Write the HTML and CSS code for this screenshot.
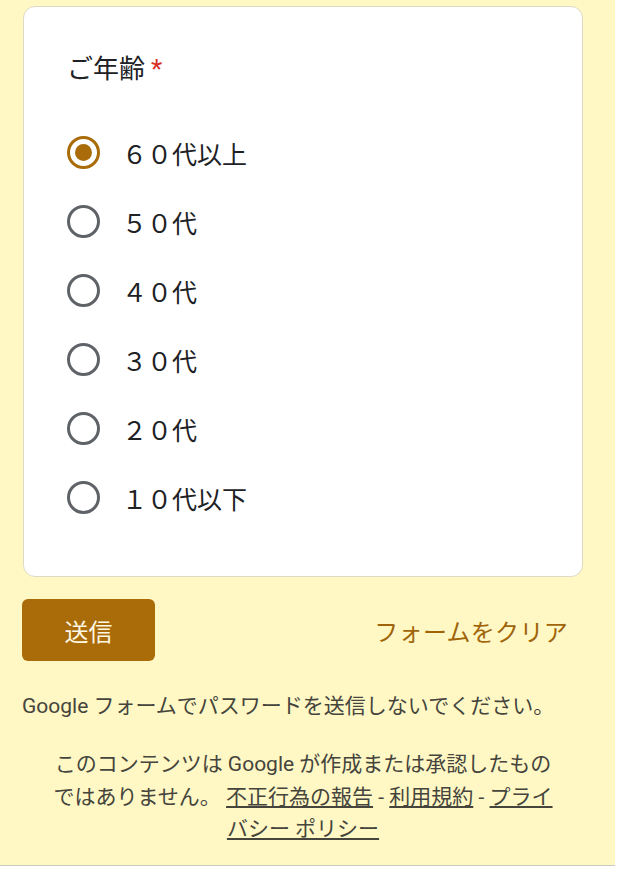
FILE: index.html
```html
<!DOCTYPE html>
<html lang="ja">
  <head>
    <meta charset="UTF-8" />
    <meta name="viewport" content="width=device-width, initial-scale=1.0" />
    <title>ご年齢</title>
    <link rel="stylesheet" href="styles.css">
  </head>
  <body>
    <div class="page">
      <div class="column">
        <div class="card">
          <div class="question-title">ご年齢<span class="required">*</span></div>
          <div class="options">
            <label class="option">
              <span class="radio checked"></span>
              <span class="option-label">６０代以上</span>
            </label>
            <label class="option">
              <span class="radio"></span>
              <span class="option-label">５０代</span>
            </label>
            <label class="option">
              <span class="radio"></span>
              <span class="option-label">４０代</span>
            </label>
            <label class="option">
              <span class="radio"></span>
              <span class="option-label">３０代</span>
            </label>
            <label class="option">
              <span class="radio"></span>
              <span class="option-label">２０代</span>
            </label>
            <label class="option">
              <span class="radio"></span>
              <span class="option-label">１０代以下</span>
            </label>
          </div>
        </div>

        <div class="actions">
          <button class="submit-button">送信</button>
          <button class="clear-button">フォームをクリア</button>
        </div>

        <p class="password-note">Google フォームでパスワードを送信しないでください。</p>

        <p class="disclaimer">
          このコンテンツは Google が作成または承認したものではありません。
          <a href="#">不正行為の報告</a> - <a href="#">利用規約</a> - <a href="#">プライバシー ポリシー</a>
        </p>
      </div>
    </div>
  </body>
</html>
```

FILE: styles.css
```css
body {
  margin: 0;
  padding: 0;
  background: #ffffff;
  font-family: "Roboto", "Noto Sans CJK JP", sans-serif;
  color: #202124;
}

.page {
  width: 615px;
  height: 866px;
  box-sizing: border-box;
  background: #fff8c4;
  border-bottom: 1px solid #c9c9c5;
  padding: 6px 0 0 23px;
  overflow: hidden;
}

.column {
  width: 560px;
}

.card {
  background: #ffffff;
  border: 1px solid #ddd9c4;
  border-radius: 12px;
  padding: 44px 43px 44px 43px;
}

.question-title {
  font-size: 26px;
  line-height: 36px;
  color: #202124;
  margin-bottom: 31px;
}

.required {
  color: #d93025;
  margin-left: 6px;
}

.options {
  display: flex;
  flex-direction: column;
}

.option {
  display: flex;
  align-items: center;
  height: 69px;
  gap: 22px;
}

.radio {
  width: 33px;
  height: 33px;
  box-sizing: border-box;
  border: 3.5px solid #5f6368;
  border-radius: 50%;
  display: flex;
  align-items: center;
  justify-content: center;
  flex-shrink: 0;
}

.radio.checked {
  border-color: #a96c08;
}

.radio.checked::after {
  content: "";
  width: 17px;
  height: 17px;
  border-radius: 50%;
  background: #a96c08;
}

.option-label {
  font-size: 25px;
  color: #202124;
}

.actions {
  display: flex;
  justify-content: space-between;
  align-items: center;
  margin-top: 22px;
}

.submit-button {
  width: 133px;
  height: 62px;
  border: none;
  border-radius: 6px;
  background: #a96c08;
  color: #fff8e4;
  font-family: inherit;
  font-size: 24px;
  margin-left: -1px;
}

.clear-button {
  background: none;
  border: none;
  color: #a0650a;
  font-family: inherit;
  font-size: 24px;
  padding: 10px 15px;
  letter-spacing: 0.3px;
}

.password-note {
  margin: 29px 0 0 -1px;
  font-size: 21px;
  line-height: 32px;
  color: #45443d;
}

.disclaimer {
  margin: 26px 0 0;
  padding: 0 27px;
  text-align: center;
  font-size: 21px;
  line-height: 32.5px;
  color: #45443d;
}

.disclaimer a {
  color: #45443d;
  text-decoration: underline;
}
```
